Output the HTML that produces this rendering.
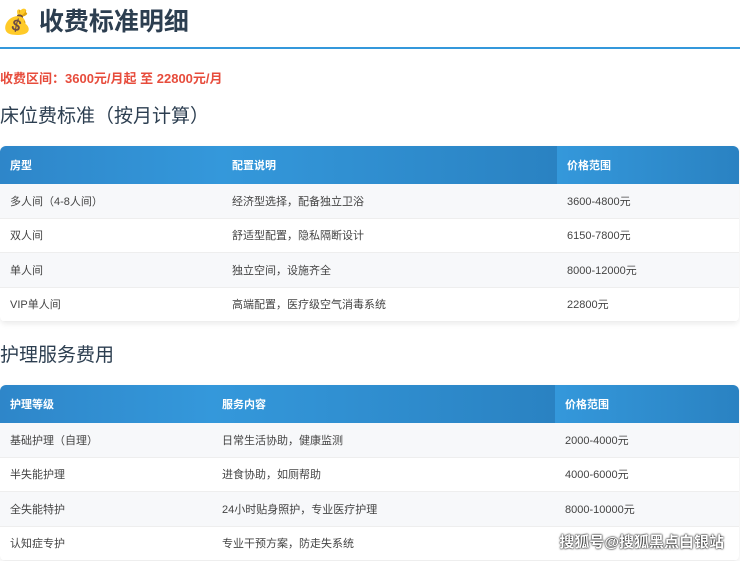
<!DOCTYPE html>
<html><head><meta charset="utf-8"><style>
body{margin:0;width:740px;height:557px;overflow:hidden;background:#fff;font-family:"Liberation Sans","Noto Sans CJK SC",sans-serif;color:#333}
h1{position:absolute;left:2px;top:4px;margin:0;font-size:25px;font-weight:bold;color:#2c3e50;line-height:36px;white-space:nowrap}
.line{position:absolute;left:0;top:47px;width:740px;height:2px;background:#3498db}
.red{position:absolute;left:0;top:68px;font-size:13px;font-weight:bold;color:#e74c3c}
h2{position:absolute;left:0;margin:0;font-size:19px;font-weight:normal;color:#2c3e50;line-height:24px}
table{position:absolute;left:0;width:739px;border-collapse:collapse;font-size:11px;border-radius:6px;overflow:hidden;box-shadow:0 2px 6px rgba(0,0,0,.08)}
th{background:linear-gradient(90deg,#2e86c9,#3498db);color:#fff;font-weight:bold;text-align:left;padding:0 10px;height:38px;font-size:11px}
th+th{background:linear-gradient(90deg,#3498db,#2a82c2)}
td{padding:0 10px;height:33.5px;border-bottom:1px solid #eee;color:#444}
tr:nth-child(even) td{background:#f7f8fa}
.wm{position:absolute;right:16px;top:531px;font-size:15px;font-weight:bold;color:#fff;text-shadow:0 0 2px #000,0 0 1px #000}
</style></head><body>
<h1><span style="font-size:24px">💰</span> 收费标准明细</h1>
<div class="line"></div>
<div class="red">收费区间：3600元/月起 至 22800元/月</div>
<h2 style="top:105px">床位费标准（按月计算）</h2>
<table style="top:146px"><tr><th style="width:202px">房型</th><th style="width:315px">配置说明</th><th>价格范围</th></tr>
<tr><td>多人间（4-8人间）</td><td>经济型选择，配备独立卫浴</td><td>3600-4800元</td></tr>
<tr><td>双人间</td><td>舒适型配置，隐私隔断设计</td><td>6150-7800元</td></tr>
<tr><td>单人间</td><td>独立空间，设施齐全</td><td>8000-12000元</td></tr>
<tr><td>VIP单人间</td><td>高端配置，医疗级空气消毒系统</td><td>22800元</td></tr></table>
<h2 style="top:344px">护理服务费用</h2>
<table style="top:385px"><tr><th style="width:192px">护理等级</th><th style="width:323px">服务内容</th><th>价格范围</th></tr>
<tr><td>基础护理（自理）</td><td>日常生活协助，健康监测</td><td>2000-4000元</td></tr>
<tr><td>半失能护理</td><td>进食协助，如厕帮助</td><td>4000-6000元</td></tr>
<tr><td>全失能特护</td><td>24小时贴身照护，专业医疗护理</td><td>8000-10000元</td></tr>
<tr><td>认知症专护</td><td>专业干预方案，防走失系统</td><td></td></tr></table>
<div class="wm">搜狐号@搜狐黑点白银站</div>
</body></html>
